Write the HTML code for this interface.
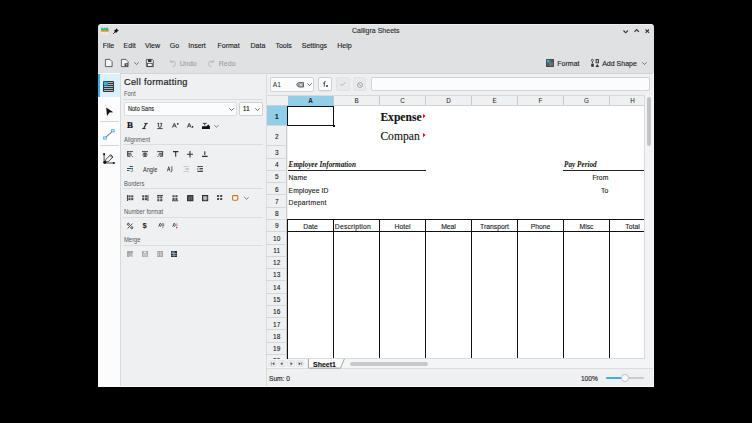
<!DOCTYPE html>
<html><head><meta charset="utf-8">
<style>
*{margin:0;padding:0;box-sizing:border-box}
html,body{width:752px;height:423px;background:#000;overflow:hidden;font-family:"Liberation Sans",sans-serif;color:#1b1d1f}
.t{-webkit-text-stroke:0.12px currentColor}
.a{position:absolute}
.t{position:absolute;white-space:nowrap;line-height:1}
svg{position:absolute;overflow:visible}
.m{font-size:7px;top:42px}
.lbl{font-size:6.5px;color:#55585c;left:123.8px;transform:scaleX(0.9);transform-origin:0 0;-webkit-text-stroke:0 !important}
.sep{position:absolute;left:123px;width:140px;height:1px;background:#dcdddf}
.rh{position:absolute;left:266px;width:21.5px;border-bottom:1px solid #d6d7d8;border-right:1px solid #c9cacb;background:#eff0f1;font-size:6.3px;text-align:center;line-height:1}
.ch{position:absolute;top:95.7px;height:10.5px;width:46px;border-right:1px solid #c9cacb;font-size:6.3px;text-align:center}
.cell{font-size:6.8px}
</style></head><body>
<!-- window -->
<div class="a" style="left:98px;top:24px;width:556px;height:363.2px;background:#e0e1e2;border-radius:3px 3px 0 0"></div>
<div class="a" style="left:100px;top:24px;width:552px;height:1px;background:#efefef"></div>

<!-- title bar -->
<svg style="left:101.2px;top:26.6px" width="7.4" height="8" viewBox="0 0 7.4 8">
  <rect x="0" y="4.7" width="7.4" height="3.2" fill="#e9f1f4"/>
  <path d="M0 5.6 H7.4 M0 6.6 H7.4" stroke="#d5e3ea" stroke-width="0.35"/>
  <path d="M3.7 4.7 V8" stroke="#f0d9dc" stroke-width="0.4"/>
  <path d="M0 4 V1.6 L1.2 0.3 L2.4 1.8 L3.5 0.6 L4.8 1.6 L6 0.2 L7.4 1.6 V4 Z" fill="#1cc7a2"/>
  <path d="M1.6 4 L2.2 2 L3 3.2 M4.6 4 L5.4 2.2 L6.4 3.3 L7.4 2.5 V4" fill="#e03a3a"/>
  <rect x="0" y="3.3" width="7.4" height="1.5" fill="#fb9a1c"/>
</svg>
<svg style="left:113px;top:27.5px" width="6" height="6" viewBox="0 0 6 6">
  <path d="M3.2 0.3 L5.7 2.8 L4.6 3.2 L3.4 4.6 L3.3 5.2 L0.8 2.7 L1.4 2.6 L2.8 1.4 Z" fill="#111"/>
  <path d="M2 4 L0.2 5.8" stroke="#111" stroke-width="0.8"/>
</svg>
<div class="t" style="left:352px;top:27px;font-size:7px;color:#2a2d30">Calligra Sheets</div>
<svg style="left:622.5px;top:29.5px" width="5.4" height="3.4" viewBox="0 0 5.4 3.4"><path d="M0.5 0.5 L2.7 2.8 L4.9 0.5" stroke="#2f3235" stroke-width="1.1" fill="none"/></svg>
<svg style="left:633.5px;top:28.8px" width="5.4" height="3.4" viewBox="0 0 5.4 3.4"><path d="M0.5 2.9 L2.7 0.6 L4.9 2.9" stroke="#2f3235" stroke-width="1.1" fill="none"/></svg>
<svg style="left:644.9px;top:28.7px" width="4.6" height="4.3" viewBox="0 0 4.6 4.3"><path d="M0.5 0.5 L4.1 3.8 M4.1 0.5 L0.5 3.8" stroke="#2f3235" stroke-width="1.05" fill="none"/></svg>

<!-- menu bar -->
<div class="t m" style="left:102.8px">File</div>
<div class="t m" style="left:123.6px">Edit</div>
<div class="t m" style="left:145px">View</div>
<div class="t m" style="left:169.8px">Go</div>
<div class="t m" style="left:188.3px">Insert</div>
<div class="t m" style="left:217.5px">Format</div>
<div class="t m" style="left:250.5px">Data</div>
<div class="t m" style="left:275.4px">Tools</div>
<div class="t m" style="left:301.8px">Settings</div>
<div class="t m" style="left:337.3px">Help</div>

<!-- toolbar -->
<svg style="left:105.3px;top:59px" width="8" height="8" viewBox="0 0 8 8"><path d="M0.4 0.4 H4.9 L7.1 2.6 V7.6 H0.4 Z" fill="#f4f4f4" stroke="#31363b" stroke-width="0.75"/></svg>
<svg style="left:120.7px;top:59px" width="8" height="8" viewBox="0 0 8 8"><path d="M0.4 0.4 H4.9 L7.1 2.6 V7.6 H0.4 Z" fill="#f4f4f4" stroke="#31363b" stroke-width="0.75"/><path d="M3.6 4.2 H6.8 V7.2 H3.6Z" fill="#31363b"/><path d="M4.4 4.4 L5.9 6.2 M5.9 5.2 v1 h-1" stroke="#f4f4f4" stroke-width="0.5" fill="none"/></svg>
<svg style="left:134.3px;top:62px" width="5" height="3" viewBox="0 0 5 3"><path d="M0.3 0.3 L2.5 2.6 L4.7 0.3" stroke="#5b5e61" stroke-width="0.8" fill="none"/></svg>
<svg style="left:145.7px;top:59px" width="8" height="8" viewBox="0 0 8 8"><path d="M0.4 0.4 H6.4 L7.3 1.3 V7.6 H0.4 Z" fill="#f4f4f4" stroke="#31363b" stroke-width="0.75"/><rect x="1.9" y="0.4" width="3.6" height="2.6" fill="#31363b"/><rect x="1.6" y="4.3" width="4.6" height="3.3" fill="none" stroke="#31363b" stroke-width="0.75"/></svg>
<svg style="left:169.5px;top:60px" width="6" height="7" viewBox="0 0 6 7"><path d="M1.6 1.6 A2.6 2.6 0 1 1 2.8 6.5" fill="none" stroke="#a5a8ab" stroke-width="0.8"/><path d="M0.5 0.2 L0.8 2.4 L2.8 2" fill="none" stroke="#a5a8ab" stroke-width="0.8"/></svg>
<div class="t" style="left:179.7px;top:60.3px;font-size:7px;color:#9fa2a6">Undo</div>
<svg style="left:208.4px;top:60px" width="6" height="7" viewBox="0 0 6 7"><path d="M4.4 1.6 A2.6 2.6 0 1 0 3.2 6.5" fill="none" stroke="#a5a8ab" stroke-width="0.8"/><path d="M5.5 0.2 L5.2 2.4 L3.2 2" fill="none" stroke="#a5a8ab" stroke-width="0.8"/></svg>
<div class="t" style="left:218.8px;top:60.3px;font-size:7px;color:#9fa2a6">Redo</div>

<svg style="left:546px;top:59px" width="8" height="8" viewBox="0 0 8 8"><rect x="0" y="0" width="8" height="8" rx="0.8" fill="#3a3f44"/><rect x="0.8" y="0.8" width="2.6" height="2.6" fill="#2fb2f0"/><path d="M0.5 4.1 H7.5 M0.5 6 H7.5 M4.1 0.5 V7.5 M6 0.5 V7.5" stroke="#9a9ea2" stroke-width="0.6"/></svg>
<div class="t" style="left:557.3px;top:60.3px;font-size:7px">Format</div>
<svg style="left:591.2px;top:59px" width="8.2" height="8" viewBox="0 0 8.2 8"><circle cx="1.4" cy="1.3" r="1.05" fill="none" stroke="#31363b" stroke-width="0.8"/><rect x="0.9" y="2.7" width="1" height="1.6" fill="#31363b"/><rect x="0.2" y="4.7" width="2.6" height="3.1" fill="#31363b"/><rect x="4.6" y="0" width="3.4" height="4.3" rx="0.5" fill="#31363b"/><rect x="5.5" y="0.9" width="1.6" height="2.5" fill="#b8bbbe"/><path d="M4.4 7.9 L6.3 5 L8.2 7.9 Z" fill="#31363b"/></svg>
<div class="t" style="left:602.2px;top:60.3px;font-size:7px">Add Shape</div>
<svg style="left:642.3px;top:62px" width="5" height="3" viewBox="0 0 5 3"><path d="M0.3 0.3 L2.5 2.6 L4.7 0.3" stroke="#5b5e61" stroke-width="0.8" fill="none"/></svg>

<!-- content base -->
<div class="a" style="left:98px;top:72.8px;width:556px;height:314.4px;background:#eff0f1"></div>
<div class="a" style="left:98px;top:72.5px;width:556px;height:0.6px;background:#d3d4d5"></div>

<!-- tool column -->
<div class="a" style="left:98px;top:73px;width:22.5px;height:314px;background:#fcfcfc"></div>
<div class="a" style="left:120.3px;top:73px;width:0.8px;height:314px;background:#d8d9da"></div>
<div class="a" style="left:98px;top:73.6px;width:22.3px;height:23.7px;background:#daf0fb"></div>
<div class="a" style="left:98px;top:73.6px;width:1.8px;height:23.7px;background:#3daee9"></div>
<svg style="left:103px;top:81px" width="11" height="11" viewBox="0 0 11 11"><rect x="0" y="0" width="11" height="11" rx="0.9" fill="#31363b"/><path d="M5 1.5 H10 M5 3.5 H10 M1 5.5 H10 M1 7.5 H10 M1 9.5 H10" stroke="#c9d3d8" stroke-width="0.8"/><rect x="0.8" y="0.8" width="4" height="3.6" rx="0.4" fill="#2fb2f0"/></svg>
<div class="a" style="left:100.3px;top:121px;width:18.5px;height:0.7px;background:#d5d6d7"></div>
<div class="a" style="left:100.3px;top:145px;width:18.5px;height:0.7px;background:#d5d6d7"></div>
<svg style="left:105px;top:105px" width="9" height="11" viewBox="0 0 9 11"><circle cx="0.7" cy="0.7" r="0.45" fill="#888"/><path d="M1.2 2.6 L8.3 7.2 L4.4 7.4 L2 10.9 Z" fill="#111"/></svg>
<svg style="left:103px;top:129.2px" width="12" height="11" viewBox="0 0 12 11"><path d="M2.3 8.8 L9.6 2.2" stroke="#31363b" stroke-width="0.85"/><rect x="0.7" y="7.9" width="2.6" height="2.2" fill="#fcfcfc" stroke="#3daee9" stroke-width="0.9"/><rect x="8.6" y="0.7" width="2.6" height="2.2" fill="#fcfcfc" stroke="#3daee9" stroke-width="0.9"/></svg>
<svg style="left:102.8px;top:152.6px" width="12" height="11.5" viewBox="0 0 12 11.5"><path d="M1.1 1 V10 H10.8" fill="none" stroke="#111" stroke-width="0.8"/><rect x="0.2" y="0.2" width="1.8" height="1.8" fill="#111"/><rect x="9.9" y="9.1" width="1.8" height="1.8" fill="#111"/><circle cx="1.8" cy="9.3" r="1.5" fill="#111"/><path d="M2.2 8.9 L3 6.3 L7.7 1.6 L10 3.9 L5.3 8.6 Z M6.9 2.4 L9.2 4.7" fill="none" stroke="#111" stroke-width="0.8"/></svg>

<!-- docker panel -->

<div class="t" style="left:124px;top:78.4px;font-size:9.2px;letter-spacing:0.3px;color:#1b1d1f;-webkit-text-stroke:0.2px #1b1d1f">Cell formatting</div>
<div class="t lbl" style="top:91.3px">Font</div>
<div class="sep" style="top:99.2px"></div>
<div class="a" style="left:124px;top:102.3px;width:112.5px;height:14px;background:#fcfcfc;border:0.8px solid #dcdddf;border-radius:2px"></div>
<div class="t" style="left:127.5px;top:105.9px;font-size:6.8px;transform:scaleX(0.82);transform-origin:0 0">Noto Sans</div>
<svg style="left:228.7px;top:108px" width="5" height="3" viewBox="0 0 5 3"><path d="M0.3 0.3 L2.5 2.6 L4.7 0.3" stroke="#31363b" stroke-width="0.7" fill="none"/></svg>
<div class="a" style="left:238.7px;top:102.3px;width:24px;height:14px;background:#fcfcfc;border:0.8px solid #cfd0d1;border-radius:2px"></div>
<div class="t" style="left:242.7px;top:105.9px;font-size:6.8px">11</div>
<svg style="left:254.6px;top:108px" width="5" height="3" viewBox="0 0 5 3"><path d="M0.3 0.3 L2.5 2.6 L4.7 0.3" stroke="#31363b" stroke-width="0.7" fill="none"/></svg>
<!-- font style icons -->
<div class="t" style="left:127px;top:121.4px;font-size:8.9px;font-family:'Liberation Serif',serif;font-weight:bold;color:#111;-webkit-text-stroke:0.2px #111">B</div>
<svg style="left:142px;top:122.8px" width="6" height="6" viewBox="0 0 6 6"><path d="M2.3 0.45 H5.7 M0.2 5.55 H3.6" stroke="#1b1d1f" stroke-width="0.9"/><path d="M4.3 0.45 L1.7 5.55" stroke="#1b1d1f" stroke-width="1.15"/></svg>
<svg style="left:156.7px;top:122.8px" width="6" height="6.2" viewBox="0 0 6 6.2"><path d="M1.4 0.4 V3.1 A1.45 1.3 0 0 0 4.3 3.1 V0.4 M0.4 0.4 H2.3 M3.4 0.4 H5.2" fill="none" stroke="#1b1d1f" stroke-width="0.8"/><path d="M0.2 5.6 H5.6" stroke="#1b1d1f" stroke-width="0.8"/></svg>
<svg style="left:171.9px;top:123.1px" width="7" height="5" viewBox="0 0 7 5"><path d="M0.3 4.6 L2.35 0.3 L4.4 4.6 M1.15 3.1 H3.55" fill="none" stroke="#1b1d1f" stroke-width="0.8"/><circle cx="5.8" cy="0.8" r="0.85" fill="#1b1d1f"/></svg>
<svg style="left:186.8px;top:123.1px" width="7" height="5" viewBox="0 0 7 5"><path d="M0.3 4.6 L2.25 0.3 L4.2 4.6 M1.1 3.1 H3.4" fill="none" stroke="#1b1d1f" stroke-width="0.8"/><circle cx="5.6" cy="3.9" r="0.8" fill="#1b1d1f"/></svg>
<svg style="left:201.7px;top:123.1px" width="8" height="6" viewBox="0 0 8 6"><path d="M0.8 0.4 H4.6 M2.7 0.4 V2.6" stroke="#1b1d1f" stroke-width="0.8"/><path d="M0 3.2 H4.6 L6.2 1.5 L7.9 3.3 V5.9 H0 Z" fill="#111"/></svg>
<svg style="left:214.1px;top:124.7px" width="5" height="2.5" viewBox="0 0 5 2.5"><path d="M0.3 0.3 L2.5 2.2 L4.7 0.3" stroke="#4a4e52" stroke-width="0.7" fill="none"/></svg>

<div class="t lbl" style="top:137.3px">Alignment</div>
<div class="sep" style="top:144.3px"></div>
<!-- alignment icons row 1 -->
<svg style="left:127px;top:151px" width="6.2" height="6" viewBox="0 0 6.2 6"><path d="M0 0.6 H6 M0.6 2.3 H4.2 M0.6 3.9 H5 M0.6 5.3 H3.4 M0.6 0.6 V5.4" stroke="#2a2e32" stroke-width="0.85"/><circle cx="5.3" cy="5.5" r="0.5" fill="#2a2e32"/></svg>
<svg style="left:142px;top:151px" width="6" height="6" viewBox="0 0 6 6"><path d="M0 0.6 H6 M1 2.3 H5 M0.3 3.9 H5.7 M1.2 5.3 H4.8 M3 1.5 V5.8" stroke="#2a2e32" stroke-width="0.85"/></svg>
<svg style="left:156.6px;top:151px" width="6.2" height="6" viewBox="0 0 6.2 6"><path d="M0.2 0.6 H6.2 M2 2.3 H5.6 M1.2 3.9 H5.6 M2.8 5.3 H5.6 M5.6 0.6 V5.4" stroke="#2a2e32" stroke-width="0.85"/><circle cx="0.9" cy="5.5" r="0.5" fill="#2a2e32"/></svg>
<svg style="left:172.5px;top:150.8px" width="5.6" height="6" viewBox="0 0 5.6 6"><path d="M0 0.6 H5.4 M2.7 0.6 V5.8" stroke="#2a2e32" stroke-width="1.05"/></svg>
<svg style="left:187.1px;top:150.5px" width="6" height="6.4" viewBox="0 0 6 6.4"><path d="M0 3.2 H6 M3 0 V6.4" stroke="#2a2e32" stroke-width="1.05"/></svg>
<svg style="left:201.8px;top:150.8px" width="5.8" height="6" viewBox="0 0 5.8 6"><path d="M0 5.4 H5.6 M2.8 0.2 V4" stroke="#2a2e32" stroke-width="1.05"/></svg>
<!-- row 2 -->
<svg style="left:127px;top:166px" width="6" height="6" viewBox="0 0 6 6"><path d="M2.5 0.5 H6 M0 2.5 H6 M0 4.5 H2.5" stroke="#2a2e32" stroke-width="0.85"/><path d="M3.8 2.9 H5.5 V5.5 H3.5" fill="none" stroke="#2fa8e6" stroke-width="0.85"/></svg>
<div class="t" style="left:142.8px;top:166.5px;font-size:6.5px;color:#2a2d30;-webkit-text-stroke:0;transform:scaleX(0.86);transform-origin:0 0">Angle</div>
<svg style="left:167px;top:165.6px" width="6.4" height="6.4" viewBox="0 0 6.4 6.4"><path d="M0.4 5.2 L1.7 0.7 L3 5.2 M1 3.4 H2.5" fill="none" stroke="#2a2e32" stroke-width="0.75"/><path d="M4.9 0.3 V4.6 Q4.9 6 3.6 6" fill="none" stroke="#2a2e32" stroke-width="0.8"/></svg>
<svg style="left:183px;top:166px" width="6.2" height="6" viewBox="0 0 6.2 6"><path d="M0.3 0.5 H6 M2.4 2.5 H6 M2.4 3.5 H6 M0.3 5.5 H6" stroke="#b9bbbd" stroke-width="0.7"/></svg>
<svg style="left:197px;top:166px" width="6.2" height="6" viewBox="0 0 6.2 6"><path d="M0.3 0.5 H6 M2.5 2.5 H6 M0.3 5.5 H6" stroke="#2a2e32" stroke-width="0.85"/><path d="M1.6 1.9 L0.3 3.1 L1.6 4.3 M2.5 4 H6" fill="none" stroke="#2a2e32" stroke-width="0.7"/></svg>

<div class="t lbl" style="top:181.3px">Borders</div>
<div class="sep" style="top:188.3px"></div>
<!-- border icons -->
<svg style="left:127px;top:194.6px" width="6.4" height="6" viewBox="0 0 6.4 6"><path d="M0.45 0 V6" stroke="#2a2e32" stroke-width="0.9"/><rect x="1.40" y="0.30" width="2.1" height="2.1" fill="#2a2e32" opacity="0.85"/><rect x="1.40" y="3.10" width="2.1" height="2.1" fill="#2a2e32" opacity="0.85"/><rect x="4.20" y="0.30" width="2.1" height="2.1" fill="#2a2e32" opacity="0.85"/><rect x="4.20" y="3.10" width="2.1" height="2.1" fill="#2a2e32" opacity="0.85"/></svg>
<svg style="left:142.3px;top:194.6px" width="6.4" height="6" viewBox="0 0 6.4 6"><path d="M5.95 0 V6" stroke="#2a2e32" stroke-width="0.9"/><rect x="0.20" y="0.30" width="2.1" height="2.1" fill="#2a2e32" opacity="0.85"/><rect x="0.20" y="3.10" width="2.1" height="2.1" fill="#2a2e32" opacity="0.85"/><rect x="3.00" y="0.30" width="2.1" height="2.1" fill="#2a2e32" opacity="0.85"/><rect x="3.00" y="3.10" width="2.1" height="2.1" fill="#2a2e32" opacity="0.85"/></svg>
<svg style="left:156.9px;top:194.6px" width="6" height="6" viewBox="0 0 6 6"><path d="M0 0.45 H6" stroke="#2a2e32" stroke-width="0.9"/><rect x="0.30" y="1.40" width="2.1" height="2.0" fill="#2a2e32" opacity="0.85"/><rect x="0.30" y="4.20" width="2.1" height="2.0" fill="#2a2e32" opacity="0.85"/><rect x="3.20" y="1.40" width="2.1" height="2.0" fill="#2a2e32" opacity="0.85"/><rect x="3.20" y="4.20" width="2.1" height="2.0" fill="#2a2e32" opacity="0.85"/></svg>
<svg style="left:171.5px;top:194.6px" width="6.2" height="6.2" viewBox="0 0 6.2 6.2"><path d="M0 5.75 H6.2" stroke="#2a2e32" stroke-width="0.9"/><rect x="0.50" y="0.20" width="2.1" height="2.0" fill="#2a2e32" opacity="0.85"/><rect x="0.50" y="3.00" width="2.1" height="2.0" fill="#2a2e32" opacity="0.85"/><rect x="3.40" y="0.20" width="2.1" height="2.0" fill="#2a2e32" opacity="0.85"/><rect x="3.40" y="3.00" width="2.1" height="2.0" fill="#2a2e32" opacity="0.85"/></svg>
<svg style="left:186.9px;top:194.6px" width="6.4" height="6.2" viewBox="0 0 6.4 6.2"><rect x="0" y="0" width="6.4" height="6.2" rx="0.4" fill="#2a2e32"/><path d="M2.15 0.6 V5.6 M4.25 0.6 V5.6 M0.6 2.1 H5.8 M0.6 4.1 H5.8" stroke="#9a9c9f" stroke-width="0.45"/></svg>
<svg style="left:202px;top:194.6px" width="6.2" height="6.2" viewBox="0 0 6.2 6.2"><rect x="0.5" y="0.5" width="5.2" height="5.2" fill="#8d9093" stroke="#2a2e32" stroke-width="1"/><path d="M3.1 1 V5.2 M1 3.1 H5.2" stroke="#e8e8e8" stroke-width="0.6"/></svg>
<svg style="left:216.9px;top:195px" width="5.3" height="5" viewBox="0 0 5.3 5"><rect x="0.00" y="0.00" width="2.1" height="2.0" fill="#2a2e32" opacity="0.85"/><rect x="0.00" y="3.00" width="2.1" height="2.0" fill="#2a2e32" opacity="0.85"/><rect x="3.10" y="0.00" width="2.1" height="2.0" fill="#2a2e32" opacity="0.85"/><rect x="3.10" y="3.00" width="2.1" height="2.0" fill="#2a2e32" opacity="0.85"/></svg>
<svg style="left:232px;top:195px" width="6.4" height="5.8" viewBox="0 0 6.4 5.8"><rect x="0.6" y="0.6" width="5.2" height="4.6" rx="0.9" fill="#fcfcfc" stroke="#c8711f" stroke-width="1.1"/></svg>
<svg style="left:243.7px;top:196.6px" width="5" height="2.5" viewBox="0 0 5 2.5"><path d="M0.3 0.3 L2.5 2.2 L4.7 0.3" stroke="#4a4e52" stroke-width="0.7" fill="none"/></svg>

<div class="t lbl" style="top:209.3px">Number format</div>
<div class="sep" style="top:217.2px"></div>
<svg style="left:127px;top:223px" width="6.2" height="6" viewBox="0 0 6.2 6"><circle cx="1.4" cy="1.3" r="1" fill="none" stroke="#2a2e32" stroke-width="0.9"/><circle cx="4.8" cy="4.7" r="1" fill="none" stroke="#2a2e32" stroke-width="0.9"/><path d="M0.6 5.5 L5.6 0.5" stroke="#2a2e32" stroke-width="0.85"/></svg>
<div class="t" style="left:142.5px;top:221.8px;font-size:7.6px;font-weight:bold;color:#1b1d1f;-webkit-text-stroke:0">$</div>
<svg style="left:157.5px;top:223.2px" width="6.6" height="5.2" viewBox="0 0 6.6 5.2"><circle cx="0.45" cy="3.3" r="0.45" fill="#2a2e32"/><ellipse cx="2.3" cy="1.85" rx="0.95" ry="1.45" fill="none" stroke="#2a2e32" stroke-width="0.8"/><ellipse cx="4.9" cy="1.85" rx="0.95" ry="1.45" fill="none" stroke="#5d6064" stroke-width="0.8"/><circle cx="4.9" cy="4.4" r="0.75" fill="#3daee9"/></svg>
<svg style="left:172.3px;top:223.2px" width="6" height="5.4" viewBox="0 0 6 5.4"><circle cx="0.45" cy="3.3" r="0.45" fill="#2a2e32"/><ellipse cx="2.3" cy="1.85" rx="0.95" ry="1.45" fill="none" stroke="#2a2e32" stroke-width="0.8"/><path d="M4.9 0.3 V3.4" stroke="#6d7074" stroke-width="0.7"/><rect x="4" y="3.9" width="1.4" height="1.4" fill="#da4453"/></svg>

<div class="t lbl" style="top:237.3px">Merge</div>
<div class="sep" style="top:245.1px"></div>
<svg style="left:127px;top:251px" width="6" height="6" viewBox="0 0 6 6"><rect x="0" y="0" width="6" height="6" fill="#a6a9ac"/><path d="M2.2 5.3 H5.3 V2.2" fill="none" stroke="#e9eaeb" stroke-width="0.8"/><path d="M1.5 4.5 L4 2" stroke="#e9eaeb" stroke-width="0.6"/></svg>
<svg style="left:142px;top:251px" width="6" height="6" viewBox="0 0 6 6"><rect x="0" y="0" width="6" height="6" fill="#a6a9ac"/><path d="M0.8 3.2 H5.2 M0.8 4.9 H5.2" stroke="#e9eaeb" stroke-width="0.75"/><rect x="1.8" y="0.6" width="2.4" height="1.6" fill="#e9eaeb"/></svg>
<svg style="left:156.5px;top:251px" width="6" height="6" viewBox="0 0 6 6"><rect x="0" y="0" width="6" height="6" fill="#a6a9ac"/><path d="M1.1 0.8 V5.2 M3.9 0.8 V5.2" stroke="#e9eaeb" stroke-width="0.8"/></svg>
<svg style="left:171px;top:251px" width="6" height="6" viewBox="0 0 6 6"><rect x="0" y="0" width="6" height="6" fill="#2a2e32"/><rect x="0.6" y="0.5" width="2" height="1.6" fill="#2f8fd6"/><path d="M3 0.3 V5.7 M0.4 2.5 H5.6 M0.4 4.3 H5.6" stroke="#e9eaeb" stroke-width="0.55"/></svg>

<!-- ============ SHEET AREA ============ -->
<!-- name box -->
<div class="a" style="left:269.6px;top:76.8px;width:44.7px;height:15.4px;background:#fcfcfc;border:0.8px solid #d3d4d5;border-radius:2px"></div>
<div class="t" style="left:272.8px;top:82.2px;font-size:6.7px;color:#2a2d30;-webkit-text-stroke:0">A1</div>
<svg style="left:295.5px;top:81.6px" width="8" height="5.5" viewBox="0 0 8 5.5"><path d="M0.5 2.75 L2.6 0.45 H7.5 V5.05 H2.6 Z" fill="#9da0a3" stroke="#4d5054" stroke-width="0.8"/><path d="M3.9 1.6 L5.9 3.9 M5.9 1.6 L3.9 3.9" stroke="#fcfcfc" stroke-width="0.65"/></svg>
<svg style="left:307.1px;top:83.2px" width="5" height="3" viewBox="0 0 5 3"><path d="M0.3 0.3 L2.5 2.6 L4.7 0.3" stroke="#31363b" stroke-width="0.7" fill="none"/></svg>
<!-- fx -->
<div class="a" style="left:318.4px;top:77.4px;width:13.2px;height:13.8px;background:#fcfcfc;border:0.8px solid #cdcecf;border-radius:2px;box-shadow:0 0.6px 0 #d8d9da"></div>
<svg style="left:322.8px;top:81px" width="5" height="6" viewBox="0 0 5 6"><path d="M2.6 0.4 C1.6 0.2 1.3 0.8 1.3 1.6 V5.6 M0.3 2.2 H2.2" fill="none" stroke="#232629" stroke-width="0.8"/><circle cx="4" cy="5" r="0.9" fill="#232629"/></svg>
<!-- check / cancel -->
<div class="a" style="left:336px;top:77.4px;width:13.5px;height:13.6px;background:#e8e9ea;border:0.6px solid #e1e2e3;border-radius:2px"></div>
<svg style="left:340px;top:82px" width="6" height="4" viewBox="0 0 6 4"><path d="M0.3 2 L2 3.6 L5.7 0.3" fill="none" stroke="#a0a3a6" stroke-width="0.7"/></svg>
<div class="a" style="left:353.1px;top:77.4px;width:13.2px;height:13.6px;background:#e8e9ea;border:0.6px solid #e1e2e3;border-radius:2px"></div>
<svg style="left:357.1px;top:81.6px" width="6" height="6" viewBox="0 0 6 6"><circle cx="3" cy="3" r="2.5" fill="none" stroke="#8e9194" stroke-width="0.7"/><path d="M1.3 1.3 L4.7 4.7" stroke="#8e9194" stroke-width="0.7"/></svg>
<!-- formula input -->
<div class="a" style="left:370.7px;top:77.3px;width:279.8px;height:13.8px;background:#fcfcfc;border:0.8px solid #d3d4d5;border-radius:2px"></div>

<!-- header row -->
<div class="a" style="left:266.2px;top:95.2px;width:378px;height:11.2px;background:#eff0f1;border-top:0.8px solid #d8d9da;border-bottom:0.8px solid #cfd0d1"></div>
<div class="a" style="left:287.5px;top:95.8px;width:46.3px;height:10.4px;background:#93cee9"></div>

<!-- grid -->
<div class="a" style="left:287.5px;top:106.3px;width:357px;height:252.7px;background:#fff"></div>
<!-- row headers -->
<div class="a" style="left:266.2px;top:106.3px;width:21.1px;height:252.7px;background:#eff0f1;border-right:0.8px solid #c9cacb"></div>
<div class="a" style="left:266.2px;top:106.3px;width:21.1px;height:19.7px;background:#93cee9"></div>

<div class="a" style="left:333.0px;top:95.8px;width:0.8px;height:10.4px;background:#c9cacb"></div>
<div class="t" style="left:287.5px;top:97.7px;width:46px;text-align:center;font-size:6.3px;font-weight:bold;-webkit-text-stroke:0.05px;color:#25282b">A</div>
<div class="a" style="left:379.0px;top:95.8px;width:0.8px;height:10.4px;background:#c9cacb"></div>
<div class="t" style="left:333.5px;top:97.7px;width:46px;text-align:center;font-size:6.3px;-webkit-text-stroke:0.05px;color:#25282b">B</div>
<div class="a" style="left:425.0px;top:95.8px;width:0.8px;height:10.4px;background:#c9cacb"></div>
<div class="t" style="left:379.5px;top:97.7px;width:46px;text-align:center;font-size:6.3px;-webkit-text-stroke:0.05px;color:#25282b">C</div>
<div class="a" style="left:471.0px;top:95.8px;width:0.8px;height:10.4px;background:#c9cacb"></div>
<div class="t" style="left:425.5px;top:97.7px;width:46px;text-align:center;font-size:6.3px;-webkit-text-stroke:0.05px;color:#25282b">D</div>
<div class="a" style="left:517.0px;top:95.8px;width:0.8px;height:10.4px;background:#c9cacb"></div>
<div class="t" style="left:471.5px;top:97.7px;width:46px;text-align:center;font-size:6.3px;-webkit-text-stroke:0.05px;color:#25282b">E</div>
<div class="a" style="left:563.0px;top:95.8px;width:0.8px;height:10.4px;background:#c9cacb"></div>
<div class="t" style="left:517.5px;top:97.7px;width:46px;text-align:center;font-size:6.3px;-webkit-text-stroke:0.05px;color:#25282b">F</div>
<div class="a" style="left:609.0px;top:95.8px;width:0.8px;height:10.4px;background:#c9cacb"></div>
<div class="t" style="left:563.5px;top:97.7px;width:46px;text-align:center;font-size:6.3px;-webkit-text-stroke:0.05px;color:#25282b">G</div>
<div class="t" style="left:609.5px;top:97.7px;width:46px;text-align:center;font-size:6.3px;-webkit-text-stroke:0.05px;color:#25282b">H</div>
<div class="a" style="left:266.2px;top:125.40px;width:21.1px;height:0.8px;background:#d6d7d8"></div>
<div class="t" style="left:266.2px;top:113.75px;width:21.1px;text-align:center;font-size:6.5px;font-weight:bold;">1</div>
<div class="a" style="left:266.2px;top:145.40px;width:21.1px;height:0.8px;background:#d6d7d8"></div>
<div class="t" style="left:266.2px;top:133.60px;width:21.1px;text-align:center;font-size:6.5px;">2</div>
<div class="a" style="left:266.2px;top:157.67px;width:21.1px;height:0.8px;background:#d6d7d8"></div>
<div class="t" style="left:266.2px;top:149.73px;width:21.1px;text-align:center;font-size:6.5px;">3</div>
<div class="a" style="left:266.2px;top:169.94px;width:21.1px;height:0.8px;background:#d6d7d8"></div>
<div class="t" style="left:266.2px;top:162.00px;width:21.1px;text-align:center;font-size:6.5px;">4</div>
<div class="a" style="left:266.2px;top:182.21px;width:21.1px;height:0.8px;background:#d6d7d8"></div>
<div class="t" style="left:266.2px;top:174.28px;width:21.1px;text-align:center;font-size:6.5px;">5</div>
<div class="a" style="left:266.2px;top:194.48px;width:21.1px;height:0.8px;background:#d6d7d8"></div>
<div class="t" style="left:266.2px;top:186.54px;width:21.1px;text-align:center;font-size:6.5px;">6</div>
<div class="a" style="left:266.2px;top:206.75px;width:21.1px;height:0.8px;background:#d6d7d8"></div>
<div class="t" style="left:266.2px;top:198.81px;width:21.1px;text-align:center;font-size:6.5px;">7</div>
<div class="a" style="left:266.2px;top:219.02px;width:21.1px;height:0.8px;background:#d6d7d8"></div>
<div class="t" style="left:266.2px;top:211.09px;width:21.1px;text-align:center;font-size:6.5px;">8</div>
<div class="a" style="left:266.2px;top:231.29px;width:21.1px;height:0.8px;background:#d6d7d8"></div>
<div class="t" style="left:266.2px;top:223.35px;width:21.1px;text-align:center;font-size:6.5px;">9</div>
<div class="a" style="left:266.2px;top:243.56px;width:21.1px;height:0.8px;background:#d6d7d8"></div>
<div class="t" style="left:266.2px;top:235.62px;width:21.1px;text-align:center;font-size:6.5px;">10</div>
<div class="a" style="left:266.2px;top:255.83px;width:21.1px;height:0.8px;background:#d6d7d8"></div>
<div class="t" style="left:266.2px;top:247.90px;width:21.1px;text-align:center;font-size:6.5px;">11</div>
<div class="a" style="left:266.2px;top:268.10px;width:21.1px;height:0.8px;background:#d6d7d8"></div>
<div class="t" style="left:266.2px;top:260.17px;width:21.1px;text-align:center;font-size:6.5px;">12</div>
<div class="a" style="left:266.2px;top:280.37px;width:21.1px;height:0.8px;background:#d6d7d8"></div>
<div class="t" style="left:266.2px;top:272.44px;width:21.1px;text-align:center;font-size:6.5px;">13</div>
<div class="a" style="left:266.2px;top:292.64px;width:21.1px;height:0.8px;background:#d6d7d8"></div>
<div class="t" style="left:266.2px;top:284.71px;width:21.1px;text-align:center;font-size:6.5px;">14</div>
<div class="a" style="left:266.2px;top:304.91px;width:21.1px;height:0.8px;background:#d6d7d8"></div>
<div class="t" style="left:266.2px;top:296.98px;width:21.1px;text-align:center;font-size:6.5px;">15</div>
<div class="a" style="left:266.2px;top:317.18px;width:21.1px;height:0.8px;background:#d6d7d8"></div>
<div class="t" style="left:266.2px;top:309.25px;width:21.1px;text-align:center;font-size:6.5px;">16</div>
<div class="a" style="left:266.2px;top:329.45px;width:21.1px;height:0.8px;background:#d6d7d8"></div>
<div class="t" style="left:266.2px;top:321.51px;width:21.1px;text-align:center;font-size:6.5px;">17</div>
<div class="a" style="left:266.2px;top:341.72px;width:21.1px;height:0.8px;background:#d6d7d8"></div>
<div class="t" style="left:266.2px;top:333.78px;width:21.1px;text-align:center;font-size:6.5px;">18</div>
<div class="a" style="left:266.2px;top:353.99px;width:21.1px;height:0.8px;background:#d6d7d8"></div>
<div class="t" style="left:266.2px;top:346.06px;width:21.1px;text-align:center;font-size:6.5px;">19</div>
<div class="t" style="left:266.2px;top:358.33px;width:21.1px;text-align:center;font-size:6.5px;">20</div>

<!-- cell contents -->
<div class="a" style="left:287.3px;top:106px;width:46.6px;height:20.2px;border:0.9px solid #111"></div>
<div class="a" style="left:332.6px;top:125px;width:2px;height:2px;background:#111"></div>
<div class="t" style="left:380.4px;top:112px;font-size:11.6px;font-family:'Liberation Serif',serif;font-weight:bold;color:#111">Expense</div>
<svg style="left:423.1px;top:113.9px" width="2.6" height="4.2" viewBox="0 0 2.6 4.2"><path d="M0 0 L2.6 2.1 L0 4.2Z" fill="#f00"/></svg>
<div class="t" style="left:380.4px;top:131.4px;font-size:11.6px;font-family:'Liberation Serif',serif;color:#111">Compan</div>
<svg style="left:423.1px;top:133.4px" width="2.6" height="4.2" viewBox="0 0 2.6 4.2"><path d="M0 0 L2.6 2.1 L0 4.2Z" fill="#f00"/></svg>
<div class="t" style="left:288.6px;top:162.3px;font-size:7.2px;font-family:'Liberation Serif',serif;font-weight:bold;font-style:italic;color:#111;-webkit-text-stroke:0">Employee Information</div>
<div class="a" style="left:287.5px;top:169.9px;width:138px;height:0.9px;background:#222"></div>
<div class="t cell" style="left:288.6px;top:175.1px;letter-spacing:0.1px">Name</div>
<div class="t cell" style="left:288.6px;top:187.8px;letter-spacing:0.1px">Employee ID</div>
<div class="t cell" style="left:288.6px;top:200.1px;letter-spacing:0.25px">Department</div>
<div class="t" style="left:564.1px;top:162px;font-size:7.2px;font-family:'Liberation Serif',serif;font-weight:bold;font-style:italic;color:#111;-webkit-text-stroke:0">Pay Period</div>
<div class="a" style="left:563.3px;top:169.9px;width:81.1px;height:0.9px;background:#222"></div>
<div class="t cell" style="left:560px;top:175.1px;width:48.3px;text-align:right">From</div>
<div class="t cell" style="left:560px;top:187.8px;width:48.3px;text-align:right">To</div>
<!-- table header row 9 -->
<div class="a" style="left:287.1px;top:219.2px;width:0.9px;height:140px;background:#111"></div>
<div class="a" style="left:287.1px;top:219.2px;width:357.3px;height:0.9px;background:#111"></div>
<div class="a" style="left:287.1px;top:230.6px;width:357.3px;height:0.9px;background:#111"></div>
<div class="a" style="left:333.05px;top:219.2px;width:0.9px;height:140px;background:#111"></div>
<div class="a" style="left:379.05px;top:219.2px;width:0.9px;height:140px;background:#111"></div>
<div class="a" style="left:425.05px;top:219.2px;width:0.9px;height:140px;background:#111"></div>
<div class="a" style="left:471.05px;top:219.2px;width:0.9px;height:140px;background:#111"></div>
<div class="a" style="left:517.05px;top:219.2px;width:0.9px;height:140px;background:#111"></div>
<div class="a" style="left:563.05px;top:219.2px;width:0.9px;height:140px;background:#111"></div>
<div class="a" style="left:609.05px;top:219.2px;width:0.9px;height:140px;background:#111"></div>
<div class="t cell" style="left:287.5px;top:223.7px;width:46px;text-align:center">Date</div>
<div class="t cell" style="left:334.8px;top:223.7px;letter-spacing:0.2px">Description</div>
<div class="t cell" style="left:379.5px;top:223.7px;width:46px;text-align:center">Hotel</div>
<div class="t cell" style="left:425.5px;top:223.7px;width:46px;text-align:center">Meal</div>
<div class="t cell" style="left:471.5px;top:223.7px;width:46px;text-align:center">Transport</div>
<div class="t cell" style="left:517.5px;top:223.7px;width:46px;text-align:center">Phone</div>
<div class="t cell" style="left:563.5px;top:223.7px;width:46px;text-align:center">Misc</div>
<div class="t cell" style="left:609.5px;top:223.7px;width:46px;text-align:center">Total</div>

<!-- vertical scrollbar -->
<div class="a" style="left:644.4px;top:95.2px;width:9.6px;height:264px;background:#f2f3f4;border-left:0.8px solid #d8d9da"></div>
<div class="a" style="left:287.5px;top:358.4px;width:357.7px;height:0.8px;background:#d8d9da"></div>
<div class="a" style="left:647px;top:97.4px;width:3.9px;height:49px;background:#c3c4c5;border-radius:2px"></div>

<!-- tab bar -->
<div class="a" style="left:266.2px;top:359.2px;width:387.6px;height:9.3px;background:#f4f5f6"></div>
<!-- tab nav -->
<div class="a" style="left:268.4px;top:360.1px;width:8.4px;height:7px;background:#eeeff0;border:0.5px solid #e4e5e6;border-radius:1.5px"></div>
<div class="a" style="left:277.5px;top:360.1px;width:8.4px;height:7px;background:#eeeff0;border:0.5px solid #e4e5e6;border-radius:1.5px"></div>
<div class="a" style="left:286.6px;top:360.1px;width:8.4px;height:7px;background:#eeeff0;border:0.5px solid #e4e5e6;border-radius:1.5px"></div>
<div class="a" style="left:295.7px;top:360.1px;width:8.4px;height:7px;background:#eeeff0;border:0.5px solid #e4e5e6;border-radius:1.5px"></div>
<svg style="left:270.6px;top:361.9px" width="4" height="3.4" viewBox="0 0 4 3.4"><path d="M0.3 0 V3.4" stroke="#4a4e52" stroke-width="0.55"/><path d="M3.4 0.1 L1.1 1.7 L3.4 3.3Z" fill="#4a4e52"/></svg>
<svg style="left:280.4px;top:361.9px" width="3" height="3.4" viewBox="0 0 3 3.4"><path d="M2.5 0.1 L0.3 1.7 L2.5 3.3Z" fill="#4a4e52"/></svg>
<svg style="left:289.6px;top:361.9px" width="3" height="3.4" viewBox="0 0 3 3.4"><path d="M0.5 0.1 L2.7 1.7 L0.5 3.3Z" fill="#4a4e52"/></svg>
<svg style="left:298.2px;top:361.9px" width="4" height="3.4" viewBox="0 0 4 3.4"><path d="M3.7 0 V3.4" stroke="#4a4e52" stroke-width="0.55"/><path d="M0.6 0.1 L2.9 1.7 L0.6 3.3Z" fill="#4a4e52"/></svg>
<div class="a" style="left:349.9px;top:361.9px;width:77.8px;height:3.7px;background:#c8c9ca;border-radius:2px"></div>

<!-- status bar -->
<div class="a" style="left:266.2px;top:368.3px;width:387.6px;height:18.7px;background:#eff0f1;border-top:0.8px solid #dcdddf"></div>
<div class="t" style="left:269px;top:375.6px;font-size:6.6px">Sum: 0</div>
<div class="t" style="left:580.9px;top:376px;font-size:6.6px">100%</div>
<div class="a" style="left:606px;top:376.7px;width:38.4px;height:2.6px;background:#c9cacb;border-radius:1.3px"></div>
<div class="a" style="left:606px;top:376.7px;width:19px;height:2.6px;background:#3daee9;border-radius:1.3px"></div>
<div class="a" style="left:621.4px;top:374.1px;width:7.6px;height:7.6px;background:#fcfcfc;border:0.7px solid #bdbec0;border-radius:50%"></div>
<div class="a" style="left:652.6px;top:73px;width:1.4px;height:314px;background:#f8f8f9"></div>
<div class="a" style="left:265.6px;top:73px;width:0.8px;height:312.6px;background:#dadbdc"></div>
<div class="a" style="left:98px;top:385.6px;width:556px;height:1.6px;background:#fafafa"></div>
<!-- sheet tab -->
<svg style="left:307.5px;top:359px" width="37" height="10" viewBox="0 0 37 10"><path d="M0.4 0 V8.5 Q0.4 9.1 1 9.1 H32.5 L36.3 0" fill="#fcfcfc" stroke="#8e9194" stroke-width="0.8"/></svg>
<div class="t" style="left:313px;top:360.6px;font-size:7px;font-weight:bold;color:#111">Sheet1</div>
</body></html>
